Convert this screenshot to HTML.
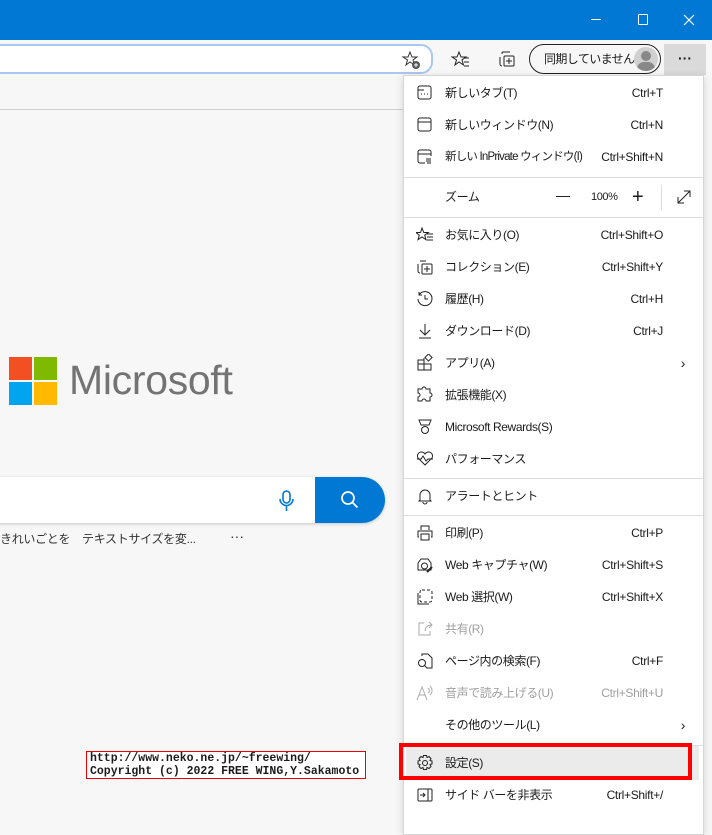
<!DOCTYPE html>
<html><head><meta charset="utf-8"><style>
*{margin:0;padding:0;box-sizing:border-box}
body{width:712px;height:818px;overflow:hidden;background:#f7f7f7;position:relative;font-family:"Liberation Sans","Noto Sans CJK JP",sans-serif;color:#1b1b1b}
.a{position:absolute}
.menu{position:absolute;left:403px;top:75px;width:301px;height:760px;background:#fff;border:1px solid #d6d6d6;box-shadow:0 2px 8px rgba(0,0,0,.15)}
.it{position:absolute;left:0;width:299px;height:32px;font-size:12px;line-height:32px;letter-spacing:-0.4px}
.it .t{position:absolute;left:41px}
.it .k{position:absolute;right:40px;letter-spacing:-0.3px}
.it svg{position:absolute;left:12px;top:7px}
.dis{color:#a0a0a0}
.sep{position:absolute;left:0;width:299px;height:1px;background:#dcdcdc}
.chev{position:absolute;right:18px;font-size:14px}
</style></head><body>
<div class="a" style="left:0;top:0;width:712px;height:40px;background:#0078d4"></div>
<div class="a" style="left:591px;top:19px;width:10px;height:1px;background:#fff"></div>
<div class="a" style="left:638px;top:14px;width:10px;height:11px;border:1px solid #fff;border-radius:1px"></div>
<svg class="a" style="left:683px;top:14px" width="12" height="12"><path d="M1 1l10 10M11 1L1 11" stroke="#fff" stroke-width="1.2"/></svg>
<div class="a" style="left:0;top:40px;width:712px;height:36px;background:#f7f7f7"></div>
<div class="a" style="left:-20px;top:44px;width:453px;height:30px;background:#fff;border:2px solid #a9c8ef;border-radius:12px"></div>
<svg class="a" style="left:401px;top:50px" width="20" height="20"><path d="M9 2l2 5h5l-4 3 1.5 5L9 12l-4 3 1.5-5L2 7h5z" fill="none" stroke="#333"/><circle cx="15" cy="15" r="4" fill="#555"/><path d="M13 15h4M15 13v4" stroke="#fff"/></svg>
<svg class="a" style="left:451px;top:50px" width="20" height="20"><path d="M8 2l2 5h5l-4 3 1.5 5L8 12l-4 3 1.5-5L1 7h5z" fill="none" stroke="#222"/><path d="M13 8h5M13 12h5M13 16h5" stroke="#222"/></svg>
<svg class="a" style="left:497px;top:49px" width="20" height="20"><path d="M5 5v-1a1 1 0 011-1h7M3 8v7a2 2 0 002 2" fill="none" stroke="#222"/><rect x="7" y="7" width="10" height="10" rx="1" fill="none" stroke="#222"/><path d="M12 9v6M9 12h6" stroke="#222"/></svg>
<div class="a" style="left:529px;top:44px;width:132px;height:30px;border:1px solid #222;border-radius:15px;background:#f7f7f7;font-size:12px;line-height:28px;padding-left:14px;letter-spacing:-0.6px">同期していません</div>
<div class="a" style="left:634px;top:47px;width:24px;height:24px;border-radius:12px;background:#d0d0d0;overflow:hidden"><div class="a" style="left:7px;top:4px;width:10px;height:10px;border-radius:5px;background:#888"></div><div class="a" style="left:3px;top:15px;width:18px;height:14px;border-radius:9px;background:#888"></div></div>
<div class="a" style="left:664px;top:44px;width:42px;height:31px;background:#dadada;text-align:center;font-size:14px;line-height:28px;font-weight:bold">···</div>
<div class="a" style="left:0;top:109px;width:403px;height:1px;background:#cfcfcf"></div>
<div class="a" style="left:9px;top:357px;width:23px;height:23px;background:#f25022"></div>
<div class="a" style="left:34px;top:357px;width:23px;height:23px;background:#7fba00"></div>
<div class="a" style="left:9px;top:382px;width:23px;height:23px;background:#00a4ef"></div>
<div class="a" style="left:34px;top:382px;width:23px;height:23px;background:#ffb900"></div>
<div class="a" style="left:69px;top:357px;font-size:41px;color:#737373;letter-spacing:-0.3px;line-height:46px">Microsoft</div>
<div class="a" style="left:-20px;top:477px;width:405px;height:46px;background:#fff;border-radius:0 23px 23px 0;box-shadow:0 1px 3px rgba(0,0,0,.2);overflow:hidden"><div class="a" style="left:335px;top:0;width:70px;height:46px;background:#0078d4"></div></div>
<svg class="a" style="left:278px;top:489px" width="18" height="24"><rect x="5" y="2" width="7" height="12" rx="3.5" fill="none" stroke="#0078d4" stroke-width="1.6"/><path d="M2 10a6.5 6.5 0 0013 0M8.5 17v5" fill="none" stroke="#0078d4" stroke-width="1.6"/></svg>
<svg class="a" style="left:339px;top:489px" width="22" height="22"><circle cx="9" cy="9" r="6" fill="none" stroke="#fff" stroke-width="1.7"/><path d="M13.5 13.5l5 5" stroke="#fff" stroke-width="1.7"/></svg>
<div class="a" style="left:0;top:530px;font-size:12px;color:#333;line-height:18px;letter-spacing:-0.3px">きれいごとを</div>
<div class="a" style="left:82px;top:530px;font-size:12px;color:#333;line-height:18px;letter-spacing:-0.3px">テキストサイズを変...</div>
<div class="a" style="left:230px;top:528px;font-size:14px;color:#333">···</div>
<div class="a" style="left:86px;top:751px;width:280px;height:28px;background:#fff;border:1px solid #e00;font-family:'Liberation Mono',monospace;font-weight:bold;font-size:11.5px;line-height:13px;padding:0 0 0 3px;white-space:pre;overflow:hidden">http://www.neko.ne.jp/~freewing/
Copyright (c) 2022 FREE WING,Y.Sakamoto</div>

<div class="menu">
<div class="it" style="top:1px"><svg width="18" height="18"><rect x="2" y="2" width="13" height="13" rx="2" fill="none" stroke="#222"/><path d="M2 6h6" stroke="#222"/><path d="M5 10h1M8 10h1M11 10h1" stroke="#222"/></svg><span class="t">新しいタブ(T)</span><span class="k">Ctrl+T</span></div>
<div class="it" style="top:33px"><svg width="18" height="18"><rect x="2" y="2" width="13" height="13" rx="2" fill="none" stroke="#222"/><path d="M2 6h13" stroke="#222"/></svg><span class="t">新しいウィンドウ(N)</span><span class="k">Ctrl+N</span></div>
<div class="it" style="top:65px"><svg width="18" height="18"><path d="M9 15H4a2 2 0 01-2-2V4a2 2 0 012-2h9a2 2 0 012 2v4M2 6h13" fill="none" stroke="#222"/><path d="M10 11h5M10 13h5M11 15h4" stroke="#222"/></svg><span class="t" style="letter-spacing:-0.8px;font-size:11.5px">新しい InPrivate ウィンドウ(I)</span><span class="k">Ctrl+Shift+N</span></div>
<div class="sep" style="top:101px"></div>
<div class="it" style="top:105px"><span class="t">ズーム</span><span class="a" style="left:152px;top:15px;width:14px;height:1px;background:#222"></span><span class="a" style="left:187px;font-size:11px">100%</span><span class="a" style="left:228px;font-size:20px">+</span><span class="a" style="left:257px;top:4px;width:1px;height:25px;background:#ddd"></span><svg style="left:272px;top:8px" width="16" height="16"><path d="M2 14L14 2M8 2h6v6M2 8v6h6" fill="none" stroke="#222"/></svg></div>
<div class="sep" style="top:141px"></div>
<div class="it" style="top:143px"><svg width="18" height="18"><path d="M6 2l1.8 4.5h4.5l-3.6 2.7 1.3 4.5L6 11l-4 2.7 1.3-4.5L0 6.5h4.5z" fill="none" stroke="#222"/><path d="M11 8h6M11 11h6M11 14h6" stroke="#222"/></svg><span class="t">お気に入り(O)</span><span class="k">Ctrl+Shift+O</span></div>
<div class="it" style="top:175px"><svg width="18" height="18"><path d="M4 3h6M2 6v7a2 2 0 002 2" fill="none" stroke="#222"/><rect x="6" y="6" width="10" height="10" rx="1" fill="none" stroke="#222"/><path d="M11 8v6M8 11h6" stroke="#222"/></svg><span class="t">コレクション(E)</span><span class="k">Ctrl+Shift+Y</span></div>
<div class="it" style="top:207px"><svg width="18" height="18"><path d="M3 5a7 7 0 11-1 4M3 2v3h3M9 5v4h3" fill="none" stroke="#222"/></svg><span class="t">履歴(H)</span><span class="k">Ctrl+H</span></div>
<div class="it" style="top:239px"><svg width="18" height="18"><path d="M9 2v11M4 8l5 5 5-5M3 16h12" fill="none" stroke="#222"/></svg><span class="t">ダウンロード(D)</span><span class="k">Ctrl+J</span></div>
<div class="it" style="top:271px"><svg width="18" height="18"><path d="M2 6h6v10H2zM8 10h7v6H8zM2 10h6M8 6V4" fill="none" stroke="#222"/><rect x="10" y="1" width="5" height="5" transform="rotate(45 12.5 3.5)" fill="none" stroke="#222"/></svg><span class="t">アプリ(A)</span><span class="chev">›</span></div>
<div class="it" style="top:303px"><svg width="18" height="18"><path d="M6 3a2 2 0 014 0h4v4a2 2 0 010 4v4h-4a2 2 0 00-4 0H2v-4a2 2 0 000-4V3z" fill="none" stroke="#222"/></svg><span class="t">拡張機能(X)</span></div>
<div class="it" style="top:335px"><svg width="18" height="18"><path d="M3 2h12l-2 5H5z" fill="none" stroke="#222"/><circle cx="9" cy="12" r="3.5" fill="none" stroke="#222"/></svg><span class="t">Microsoft Rewards(S)</span></div>
<div class="it" style="top:367px"><svg width="18" height="18"><path d="M9 15L2 8a3.5 3.5 0 017-4 3.5 3.5 0 017 4z" fill="none" stroke="#222"/><path d="M1 9h4l2-3 3 5 2-2h5" fill="none" stroke="#222"/></svg><span class="t">パフォーマンス</span></div>
<div class="sep" style="top:402px"></div>
<div class="it" style="top:404px"><svg width="18" height="18"><path d="M4 13V8a5 5 0 0110 0v5l1 1H3zM7 15a2 2 0 004 0" fill="none" stroke="#222"/></svg><span class="t">アラートとヒント</span></div>
<div class="sep" style="top:439px"></div>
<div class="it" style="top:441px"><svg width="18" height="18"><path d="M5 6V2h8v4M3 13H2V7h14v6h-1M5 10h8v6H5z" fill="none" stroke="#222"/></svg><span class="t">印刷(P)</span><span class="k">Ctrl+P</span></div>
<div class="it" style="top:473px"><svg width="18" height="18"><path d="M2 7l3-4h7l3 4v7H2z" fill="none" stroke="#222"/><circle cx="8.5" cy="10" r="3" fill="none" stroke="#222"/><path d="M11 16l5-5" stroke="#222" stroke-width="2"/></svg><span class="t">Web キャプチャ(W)</span><span class="k">Ctrl+Shift+S</span></div>
<div class="it" style="top:505px"><svg width="18" height="18"><path d="M2 5v11h11" fill="none" stroke="#222"/><rect x="4" y="2" width="12" height="12" rx="2" fill="none" stroke="#222" stroke-dasharray="3 2"/></svg><span class="t">Web 選択(W)</span><span class="k">Ctrl+Shift+X</span></div>
<div class="it dis" style="top:537px"><svg width="18" height="18"><path d="M8 3H3v12h11v-4M9 11c0-4 3-6 7-6M13 2l3 3-3 3" fill="none" stroke="#aaa"/></svg><span class="t">共有(R)</span></div>
<div class="it" style="top:569px"><svg width="18" height="18"><path d="M6 4V2h6l4 4v10h-5" fill="none" stroke="#222"/><circle cx="6" cy="11" r="3.5" fill="none" stroke="#222"/><path d="M8.5 13.5l3 3" stroke="#222"/></svg><span class="t">ページ内の検索(F)</span><span class="k">Ctrl+F</span></div>
<div class="it dis" style="top:601px"><svg width="18" height="18"><path d="M1 16L6 3l5 13M3 11h6M12 4a3 3 0 010 5M14 2a6 6 0 010 9" fill="none" stroke="#aaa"/></svg><span class="t">音声で読み上げる(U)</span><span class="k">Ctrl+Shift+U</span></div>
<div class="it" style="top:633px"><span class="t">その他のツール(L)</span><span class="chev">›</span></div>
<div class="sep" style="top:669px"></div>
<div class="it" style="top:670px;background:#ebebeb;left:2px;width:293px;height:34px;line-height:34px"><svg width="18" height="18" style="left:10px;top:8px"><circle cx="9" cy="9" r="2.5" fill="none" stroke="#222"/><path d="M7.5 1.5h3l.5 2 2-1 2 2-1 2 2 .5v3l-2 .5 1 2-2 2-2-1-.5 2h-3l-.5-2-2 1-2-2 1-2-2-.5v-3l2-.5-1-2 2-2 2 1z" fill="none" stroke="#222"/></svg><span class="t" style="left:39px">設定(S)</span></div>
<div class="it" style="top:703px"><svg width="18" height="18"><rect x="2" y="3" width="14" height="12" rx="1" fill="none" stroke="#222"/><path d="M12 3v12M4 9h5M7 7l2 2-2 2" fill="none" stroke="#222"/></svg><span class="t">サイド バーを非表示</span><span class="k">Ctrl+Shift+/</span></div>
</div>
<div class="a" style="left:399px;top:743px;width:293px;height:37px;border:4px solid #f00"></div>
</body></html>
